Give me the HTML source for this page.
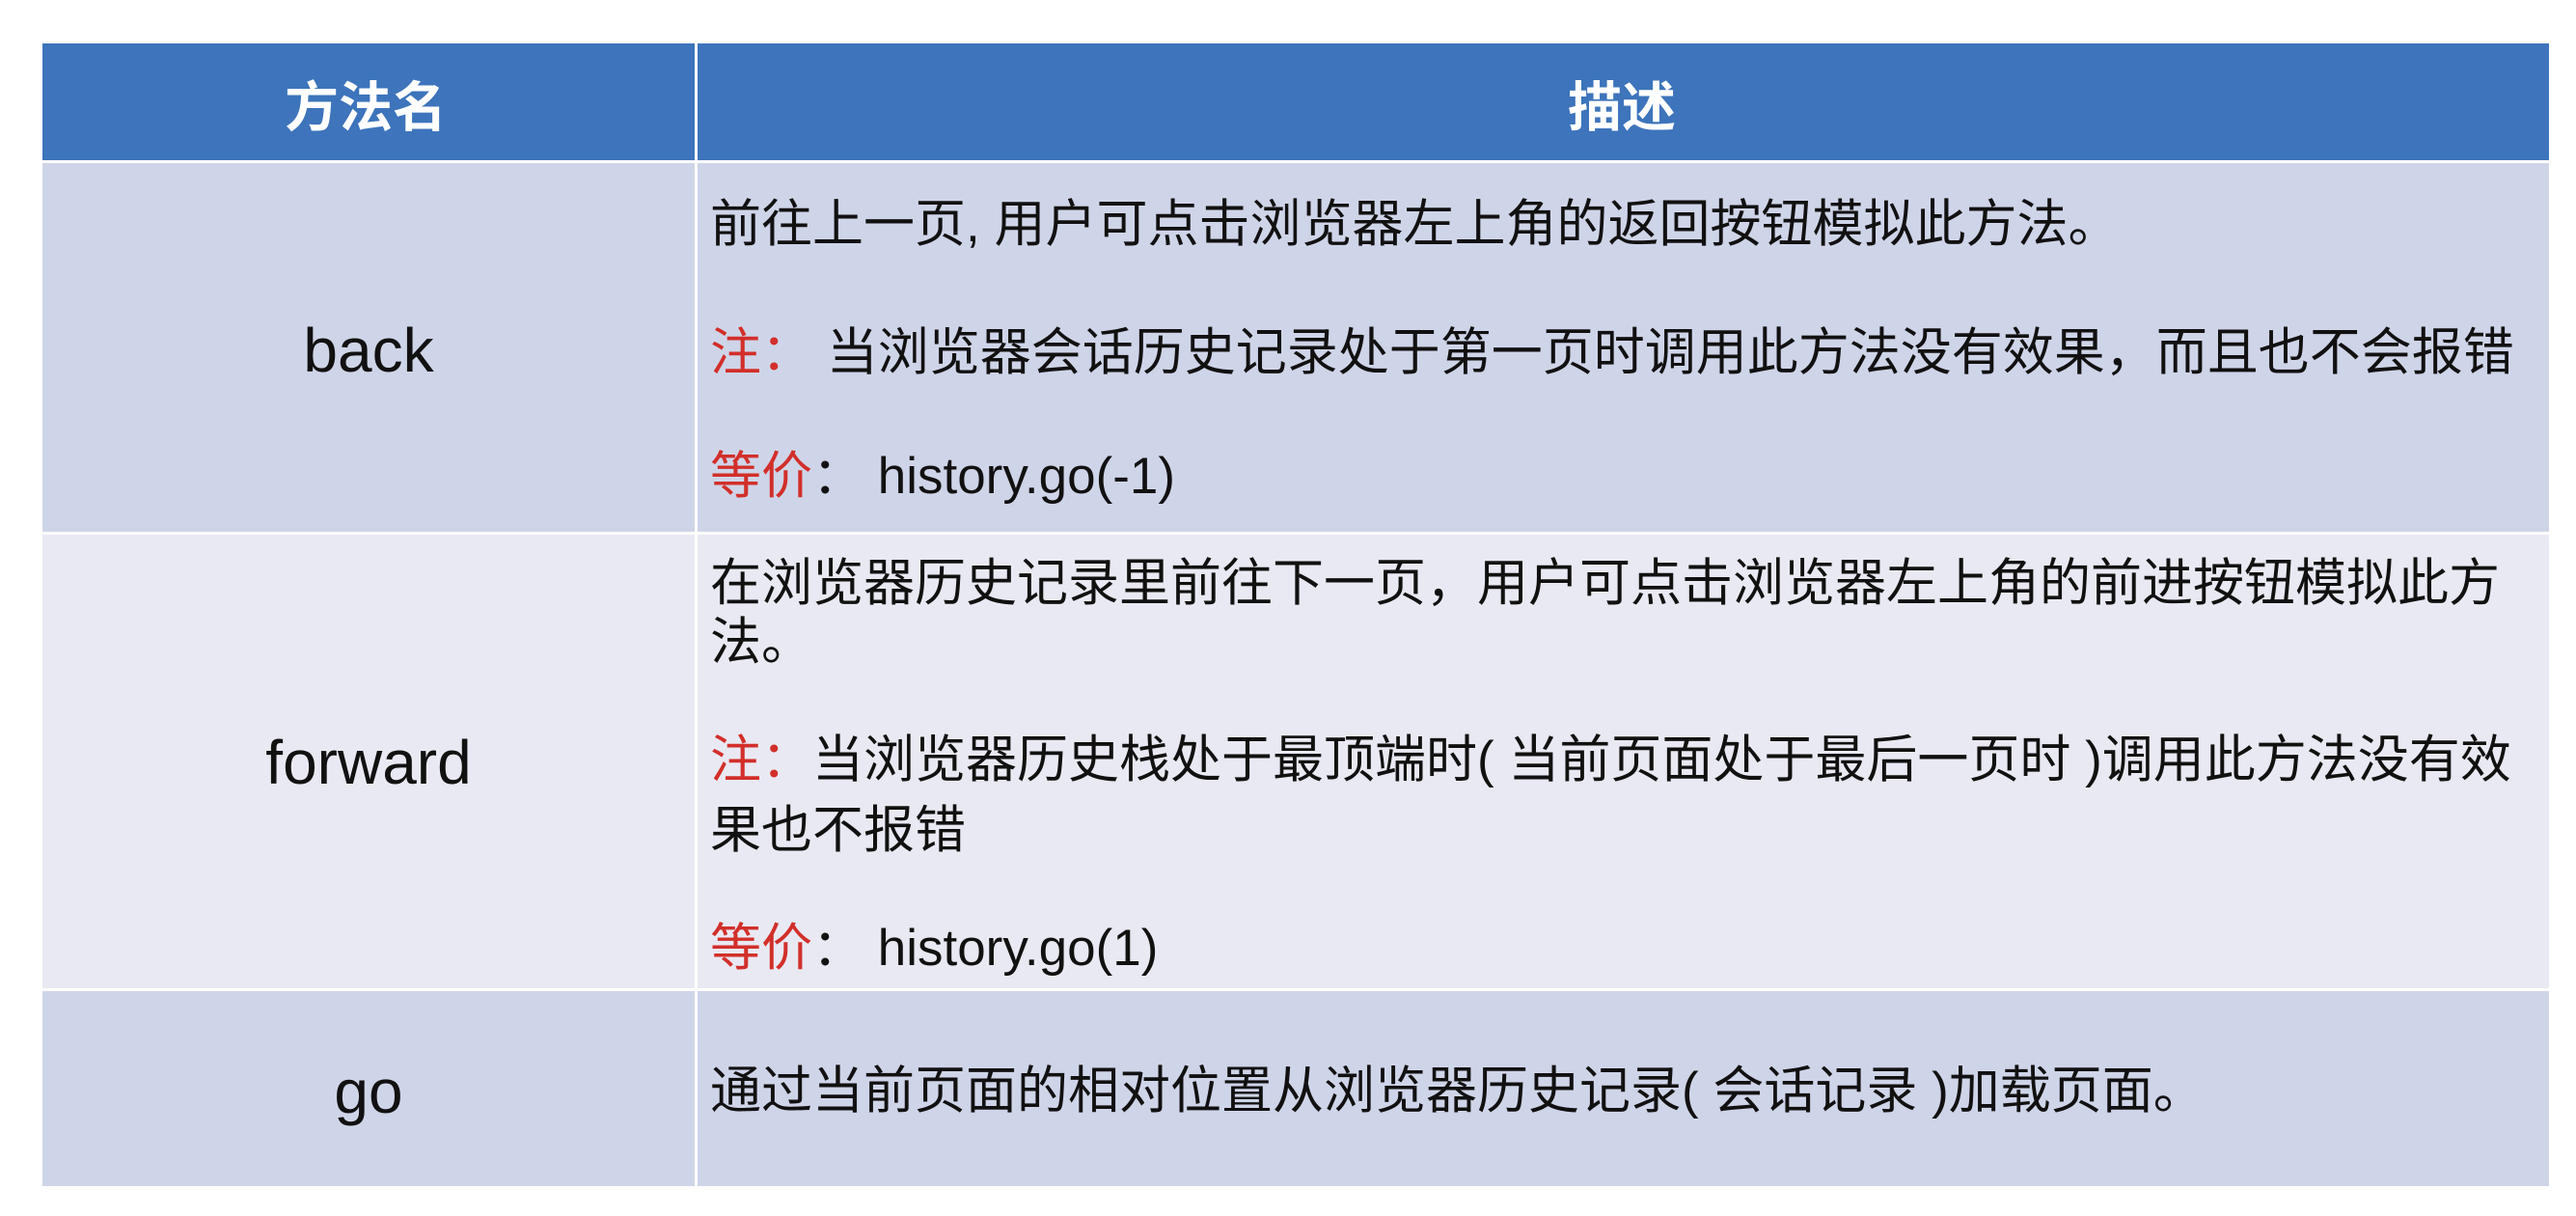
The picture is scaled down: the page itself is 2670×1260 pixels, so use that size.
<!DOCTYPE html>
<html><head><meta charset="utf-8"><style>
html,body{margin:0;padding:0;background:#fff;}
body{width:2670px;height:1260px;position:relative;overflow:hidden;font-family:"Liberation Sans","Noto Sans CJK SC",sans-serif;color:#111;}
.c{position:absolute;}
.t{position:absolute;white-space:nowrap;line-height:70px;height:70px;font-size:53px;}
.r{color:#d22f2a;}
.h{color:#fff;font-weight:bold;font-size:56px;}
.m{font-size:64px;transform:translateX(-50%);}
</style></head><body>
<div class="c" style="left:44px;top:45px;width:676px;height:121px;background:#3d74bb"></div>
<div class="c" style="left:723px;top:45px;width:1919px;height:121px;background:#3d74bb"></div>
<div class="c" style="left:44px;top:169px;width:676px;height:382px;background:#cfd5e8"></div>
<div class="c" style="left:723px;top:169px;width:1919px;height:382px;background:#cfd5e8"></div>
<div class="c" style="left:44px;top:554px;width:676px;height:470px;background:#e9e9f3"></div>
<div class="c" style="left:723px;top:554px;width:1919px;height:470px;background:#e9e9f3"></div>
<div class="c" style="left:44px;top:1027px;width:676px;height:202px;background:#cfd5e8"></div>
<div class="c" style="left:723px;top:1027px;width:1919px;height:202px;background:#cfd5e8"></div>

<div class="t h" style="left:295px;top:77px">方法名</div>
<div class="t h" style="left:1625px;top:77px">描述</div>

<div class="t m" style="left:382px;top:328px">back</div>
<div class="t m" style="left:382px;top:755px">forward</div>
<div class="t m" style="left:382px;top:1096px">go</div>

<div class="t" style="left:736px;top:198px">前往上一页, 用户可点击浏览器左上角的返回按钮模拟此方法。</div>
<div class="t" style="left:736px;top:331px"><span class="r">注：</span> 当浏览器会话历史记录处于第一页时调用此方法没有效果，而且也不会报错</div>
<div class="t" style="left:736px;top:459px"><span class="r">等价</span>： history.go(-1)</div>

<div class="t" style="left:736px;top:570px">在浏览器历史记录里前往下一页，用户可点击浏览器左上角的前进按钮模拟此方</div>
<div class="t" style="left:736px;top:631px">法。</div>
<div class="t" style="left:736px;top:753px"><span class="r">注：</span>当浏览器历史栈处于最顶端时( 当前页面处于最后一页时 )调用此方法没有效</div>
<div class="t" style="left:736px;top:826px">果也不报错</div>
<div class="t" style="left:736px;top:948px"><span class="r">等价</span>： history.go(1)</div>

<div class="t" style="left:736px;top:1096px">通过当前页面的相对位置从浏览器历史记录( 会话记录 )加载页面。</div>
</body></html>
